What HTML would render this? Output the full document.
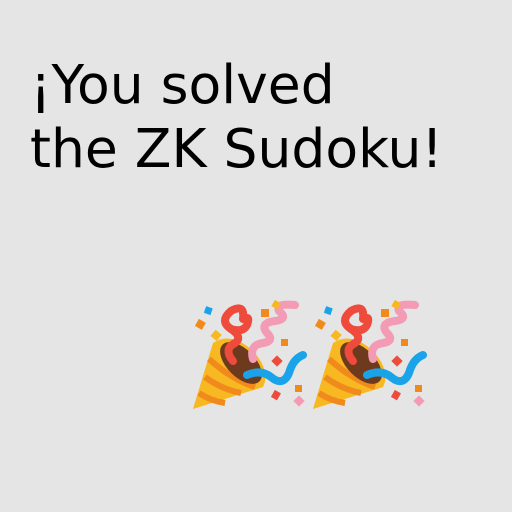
<!DOCTYPE html><html><head><style>
body{margin:0;width:512px;height:512px;background:#e5e5e5;overflow:hidden;position:relative}
.t{position:absolute;left:30px;top:53px;font-family:"DejaVu Sans",sans-serif;font-size:53.5px;line-height:64px;color:#000;white-space:nowrap}
svg{position:absolute}
</style></head><body>
<div class="t">¡You solved<br>the ZK Sudoku!</div>
<svg width="0" height="0"><defs><g id="p">
<path d="M2,116 L22,50 Q40,38 62,58 Q80,78 72,94 Z" fill="#f7b821"/>
<path d="M14,84 Q30,96 50,100 M8,100 Q20,108 34,110 M18,66 Q40,86 64,94" stroke="#f08a1c" stroke-width="6" fill="none"/>
<ellipse cx="50" cy="70" rx="26" ry="14" transform="rotate(45 50 70)" fill="#6d3a1e"/>
<path d="M42,68 Q32,56 44,50 Q52,44 40,36 Q28,28 40,18 Q54,10 52,26 M40,36 Q52,40 56,32 Q60,22 52,26" stroke="#ee4b3c" stroke-width="8" fill="none" stroke-linecap="round"/>
<path d="M62,66 Q58,52 72,50 Q84,48 76,40 Q68,30 84,28 Q98,26 88,18 Q84,10 104,12" stroke="#f39bb5" stroke-width="8" fill="none" stroke-linecap="round"/>
<path d="M56,82 Q70,76 80,84 Q92,94 98,80 Q102,66 112,62" stroke="#1aa3e8" stroke-width="8" fill="none" stroke-linecap="round"/>
<rect x="14" y="14" width="7" height="7" fill="#1aa3e8" transform="rotate(20 17 17)"/>
<rect x="6" y="27" width="8" height="8" fill="#f08a1c" transform="rotate(30 9 30)"/>
<rect x="22" y="38" width="8" height="8" fill="#f7b821" transform="rotate(40 25 41)"/>
<rect x="70" y="16" width="8" height="8" fill="#f08a1c"/>
<rect x="82" y="8" width="7" height="7" fill="#f7b821" transform="rotate(30 85 11)"/>
<rect x="82" y="64" width="8" height="8" fill="#ee4b3c" transform="rotate(45 86 68)"/>
<rect x="90" y="46" width="7" height="7" fill="#f08a1c"/>
<rect x="104" y="92" width="7" height="7" fill="#f08a1c"/>
<rect x="82" y="98" width="7" height="8" fill="#ee4b3c" transform="rotate(30 85 101)"/>
<rect x="104" y="104" width="8" height="8" fill="#f39bb5" transform="rotate(45 108 108)"/>
</g></defs></svg>
<svg style="left:191px;top:293px" width="120" height="120"><use href="#p"/></svg>
<svg style="left:311px;top:293px" width="120" height="120"><use href="#p"/></svg>
</body></html>
